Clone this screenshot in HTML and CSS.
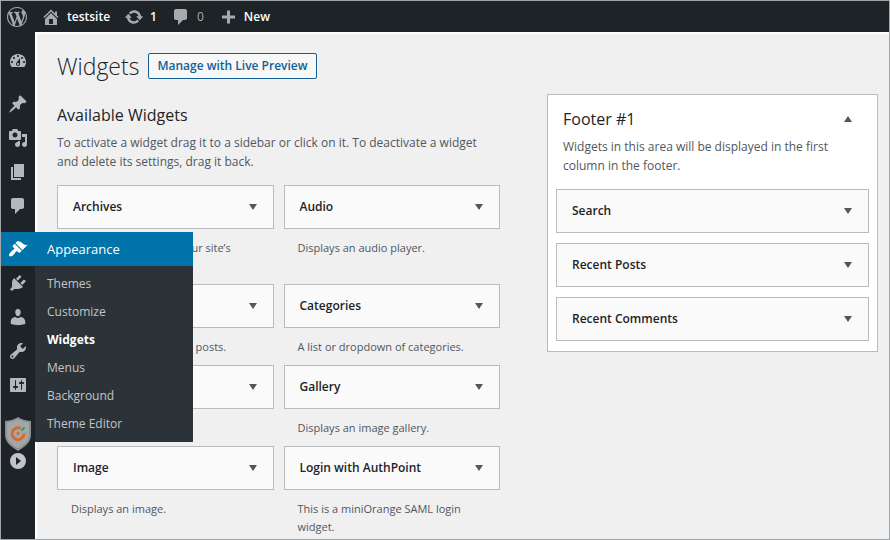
FILE: index.html
```html
<!DOCTYPE html>
<html lang="en">
<head>
<meta charset="utf-8">
<meta name="viewport" content="width=device-width, initial-scale=1">
<title>Widgets - testsite</title>
<link rel="stylesheet" href="styles.css">
</head>
<body>
<div class="frame">
  <header class="topbar">
    <a class="topbar-item topbar-logo" href="#" aria-label="WordPress"><svg class="icon" viewBox="0 0 20 20"><path d="M20 10c0-5.51-4.49-10-10-10C4.48 0 0 4.49 0 10c0 5.52 4.48 10 10 10 5.51 0 10-4.48 10-10zM7.78 15.37L4.37 6.22c.55-.02 1.17-.08 1.17-.08.5-.06.44-1.13-.06-1.11 0 0-1.45.11-2.37.11-.18 0-.37 0-.58-.01C4.12 2.69 6.87 1.11 10 1.11c2.33 0 4.45.87 6.05 2.34-.68-.11-1.65.39-1.65 1.58 0 .74.45 1.36.9 2.1.35.61.55 1.36.55 2.46 0 1.49-1.4 5-1.4 5l-3.03-8.37c.54-.02.82-.17.82-.17.5-.05.44-1.25-.06-1.22 0 0-1.44.12-2.38.12-.87 0-2.33-.12-2.33-.12-.5-.03-.56 1.2-.06 1.22l.92.08 1.26 3.41zM17.41 10c.24-.64.74-1.87.43-4.25.7 1.29 1.05 2.71 1.05 4.25 0 3.29-1.73 6.24-4.4 7.78.97-2.59 1.94-5.2 2.92-7.78zM6.1 18.09C3.12 16.65 1.11 13.53 1.11 10c0-1.3.23-2.48.72-3.59C3.25 10.3 4.67 14.2 6.1 18.09zm4.03-6.63l2.58 6.98c-.86.29-1.76.45-2.71.45-.79 0-1.57-.11-2.29-.33.81-2.38 1.62-4.74 2.42-7.1z"/></svg></a>
    <a class="topbar-item" href="#"><svg class="icon" viewBox="0 0 20 20"><path d="M16 8.5l1.53 1.53-1.06 1.06L10 4.6l-6.47 6.49-1.06-1.06L10 2.5l4 4v-2h2v4zm-6-2.46l6 5.99V18H4v-5.97zM12 17v-5H8v5h4z"/></svg>testsite</a>
    <a class="topbar-item" href="#"><svg class="icon" viewBox="0 0 20 20"><path d="M10.2 3.28c3.53 0 6.43 2.61 6.92 6h2.08l-3.5 4-3.5-4h2.32c-.45-1.97-2.21-3.45-4.32-3.45-1.45 0-2.73.71-3.54 1.78L4.95 5.66C6.23 4.2 8.11 3.28 10.2 3.28zm-.4 13.44c-3.52 0-6.43-2.61-6.92-6H.8l3.5-4c1.17 1.33 2.33 2.67 3.5 4H5.48c.45 1.97 2.21 3.45 4.32 3.45 1.45 0 2.73-.71 3.54-1.78l1.71 1.95c-1.28 1.46-3.15 2.38-5.25 2.38z"/></svg>1</a>
    <a class="topbar-item topbar-muted" href="#"><svg class="icon" viewBox="0 0 20 20"><path d="M5 2h9c1.1 0 2 .9 2 2v7c0 1.1-.9 2-2 2h-2l-5 5v-5H5c-1.1 0-2-.9-2-2V4c0-1.1.9-2 2-2z"/></svg>0</a>
    <a class="topbar-item" href="#"><svg class="icon" viewBox="0 0 20 20"><path d="M17 8.5v3h-5v5H9v-5H4v-3h5v-5h3v5h5z"/></svg>New</a>
  </header>

  <div class="shell">
    <nav class="sidebar" aria-label="Main menu">
      <a class="menu-link" href="#" aria-label="Dashboard"><svg class="icon" viewBox="0 0 20 20"><path d="M3.76 16h12.48c1.1-1.37 1.76-3.11 1.76-5 0-4.42-3.58-8-8-8s-8 3.58-8 8c0 1.89.66 3.63 1.76 5zM10 4c.55 0 1 .45 1 1s-.45 1-1 1-1-.45-1-1 .45-1 1-1zM6 6c.55 0 1 .45 1 1s-.45 1-1 1-1-.45-1-1 .45-1 1-1zm8 0c.55 0 1 .45 1 1s-.45 1-1 1-1-.45-1-1 .45-1 1-1zm-5.37 5.55L12 7v6c0 1.1-.9 2-2 2s-2-.9-2-2c0-.57.24-1.08.63-1.45zM4 10c.55 0 1 .45 1 1s-.45 1-1 1-1-.45-1-1 .45-1 1-1zm12 0c.55 0 1 .45 1 1s-.45 1-1 1-1-.45-1-1 .45-1 1-1zm-5 3c0-.55-.45-1-1-1s-1 .45-1 1 .45 1 1 1 1-.45 1-1z"/></svg></a>
      <div class="menu-group">
        <a class="menu-link" href="#" aria-label="Posts"><svg class="icon" viewBox="0 0 20 20"><path d="M10.44 3.02l1.82-1.82 6.36 6.35-1.83 1.82c-1.05-.68-2.48-.57-3.41.36l-.75.75c-.92.93-1.04 2.35-.35 3.41l-1.83 1.82-2.41-2.41-2.8 2.79c-.42.42-3.38 2.71-3.8 2.29s1.86-3.39 2.28-3.81l2.79-2.79L4.1 9.36l1.83-1.82c1.05.69 2.48.57 3.4-.36l.75-.75c.93-.92 1.05-2.35.36-3.41z"/></svg></a>
        <a class="menu-link" href="#" aria-label="Media"><svg class="icon" viewBox="0 0 20 20"><path d="M13 11V4c0-.55-.45-1-1-1h-1.67L9 1H5L3.67 3H2c-.55 0-1 .45-1 1v7c0 .55.45 1 1 1h10c.55 0 1-.45 1-1zM7 4.5c1.38 0 2.5 1.12 2.5 2.5S8.38 9.5 7 9.5 4.5 8.38 4.5 7 5.62 4.5 7 4.5zM14 6h5v10.5c0 1.38-1.12 2.5-2.5 2.5S14 17.88 14 16.5s1.12-2.5 2.5-2.5c.17 0 .34.02.5.05V9h-3V6zm-4 8.05V13h2v3.5c0 1.38-1.12 2.5-2.5 2.5S7 17.88 7 16.5 8.12 14 9.5 14c.17 0 .34.02.5.05z"/></svg></a>
        <a class="menu-link" href="#" aria-label="Pages"><svg class="icon" viewBox="0 0 20 20"><path d="M6 15V2h10v13H6zm-1 1h8v2H3V5h2v11z"/></svg></a>
        <a class="menu-link" href="#" aria-label="Comments"><svg class="icon" viewBox="0 0 20 20"><path d="M5 2h9c1.1 0 2 .9 2 2v7c0 1.1-.9 2-2 2h-2l-5 5v-5H5c-1.1 0-2-.9-2-2V4c0-1.1.9-2 2-2z"/></svg></a>
      </div>
      <div class="menu-group">
        <div class="menu-current">
          <a class="menu-link" href="#" aria-label="Appearance menu"><svg class="icon" viewBox="0 0 20 20"><path d="M14.48 11.06L7.41 3.99l1.5-1.5c.5-.56 2.3-.47 3.51.32 1.21.8 1.43 1.28 2.91 2.1 1.18.64 2.45 1.26 4.45.85zm-.71.71L6.7 4.7 4.93 6.47c-.39.39-.39 1.02 0 1.41l1.06 1.06c.39.39.39 1.03 0 1.42-.6.6-1.43 1.11-2.21 1.69-.35.26-.7.53-1.01.84C1.43 14.23.4 16.08 1.4 17.07c.99 1 2.84-.03 4.18-1.36.31-.31.58-.66.85-1.02.57-.78 1.08-1.61 1.69-2.21.39-.39 1.02-.39 1.41 0l1.06 1.06c.39.39 1.02.39 1.41 0z"/></svg></a>
          <div class="flyout">
            <a class="flyout-title" href="#">Appearance</a>
            <ul class="flyout-list">
              <li><a href="#">Themes</a></li>
              <li><a href="#">Customize</a></li>
              <li><a class="active" href="#" aria-current="page">Widgets</a></li>
              <li><a href="#">Menus</a></li>
              <li><a href="#">Background</a></li>
              <li><a href="#">Theme Editor</a></li>
            </ul>
          </div>
        </div>
        <a class="menu-link" href="#" aria-label="Plugins"><svg class="icon" viewBox="0 0 20 20"><path d="M13.11 4.36L9.87 7.6 8 5.73l3.24-3.24c.35-.34 1.05-.2 1.56.32.52.51.66 1.21.31 1.55zm-8 1.77l.91-1.12 9.01 9.01-1.19.84c-.71.71-2.63 1.16-3.82 1.16H6.14L4.9 17.26c-.59.59-1.54.59-2.12 0-.59-.58-.59-1.53 0-2.12l1.24-1.24v-3.88c0-1.13.4-3.19 1.09-3.89zm7.26 3.97l3.24-3.24c.34-.35 1.04-.21 1.55.31.52.51.66 1.21.31 1.55l-3.24 3.25z"/></svg></a>
        <a class="menu-link" href="#" aria-label="Users"><svg class="icon" viewBox="0 0 20 20"><path d="M10 9.25c-2.27 0-2.73-3.44-2.73-3.44C7 4.02 7.82 2 9.97 2c2.16 0 2.98 2.02 2.71 3.81 0 0-.41 3.44-2.68 3.44zM7.3 10c.9.7 1.8 1 2.7 1s1.800-.3 2.700-1c2.400 0 4.540 2.330 4.540 4.530v2.490s-3.650 1.130-7.240 1.130c-3.650 0-7.240-1.130-7.240-1.130v-2.490c0-2.250 2-4.530 4.540-4.530z"/></svg></a>
        <a class="menu-link" href="#" aria-label="Tools"><svg class="icon" viewBox="0 0 20 20"><path d="M16.68 9.77c-1.34 1.34-3.3 1.67-4.95.99l-5.41 6.52c-.99.99-2.59.99-3.58 0s-.99-2.59 0-3.57l6.52-5.42c-.68-1.65-.35-3.61.99-4.95 1.28-1.28 3.12-1.62 4.72-1.06l-2.89 2.89 2.82 2.82 2.86-2.87c.53 1.58.18 3.39-1.08 4.65zM3.81 16.21c.4.39 1.04.39 1.43 0 .4-.4.4-1.04 0-1.43-.39-.4-1.03-.4-1.43 0-.39.39-.39 1.03 0 1.43z"/></svg></a>
        <a class="menu-link" href="#" aria-label="Settings"><svg class="icon" viewBox="0 0 20 20"><path d="M18 16V4c0-.55-.45-1-1-1H3c-.55 0-1 .45-1 1v12c0 .55.45 1 1 1h14c.55 0 1-.45 1-1zM8 11h1c.55 0 1 .45 1 1s-.45 1-1 1H8v1.5c0 .28-.22.5-.5.5s-.5-.22-.5-.5V13H6c-.55 0-1-.45-1-1s.45-1 1-1h1V5.5c0-.28.22-.5.5-.5s.5.22.5.5V11zm5-2h-1c-.55 0-1-.45-1-1s.45-1 1-1h1V5.5c0-.28.22-.5.5-.5s.5.22.5.5V7h1c.55 0 1 .45 1 1s-.45 1-1 1h-1v5.5c0 .28-.22.5-.5.5s-.5-.22-.5-.5V9z"/></svg></a>
      </div>
      <div class="menu-group menu-extra">
        <a class="menu-link" href="#" aria-label="miniOrange"><svg class="shield" viewBox="0 0 26 34"><path fill="#8d9092" d="M13 0C10 2.5 5 3.5 0 4v14c0 8 7 12 13 16 6-4 13-8 13-16V4C21 3.5 16 2.5 13 0z"/><path fill="#a3a6a8" d="M13 2C10 4 6 5 2 5.5V18c0 7 6 10 11 13.5C18 28 24 25 24 18V5.5C20 5 16 4 13 2z"/><path fill="none" stroke="#d9681d" stroke-width="2.6" d="M15.5 11.200A6 6 0 1 0 19 16.500"/><path fill="none" stroke="#3f9455" stroke-width="2" d="M16.500 13.500l3-3"/><circle cx="13" cy="16.5" r="1.4" fill="#d9681d"/></svg></a>
        <button class="collapse" type="button" aria-label="Expand menu"><svg class="icon" viewBox="0 0 20 20"><path fill-rule="evenodd" d="M10 2a8 8 0 1 1 0 16 8 8 0 0 1 0-16zM8 6v8l5-4z"/></svg></button>
      </div>
    </nav>

    <main class="content">
      <div class="heading">
        <h1>Widgets</h1>
        <a class="preview-button" href="#">Manage with Live Preview</a>
      </div>
      <div class="columns">
        <section class="available">
          <h2>Available Widgets</h2>
          <p class="intro">To activate a widget drag it to a sidebar or click on it. To deactivate a widget and delete its settings, drag it back.</p>
          <div class="widget-grid">
            <article><button class="widget" type="button">Archives<span class="arrow"></span></button><p class="note">A monthly archive of your site’s Posts.</p></article>
            <article><button class="widget" type="button">Audio<span class="arrow"></span></button><p class="note">Displays an audio player.</p></article>
            <article><button class="widget" type="button" aria-label="Calendar"><span class="arrow"></span></button><p class="note">A calendar of your site’s posts.</p></article>
            <article><button class="widget" type="button">Categories<span class="arrow"></span></button><p class="note">A list or dropdown of categories.</p></article>
            <article><button class="widget" type="button" aria-label="Custom HTML"><span class="arrow"></span></button></article>
            <article><button class="widget" type="button">Gallery<span class="arrow"></span></button><p class="note">Displays an image gallery.</p></article>
            <article><button class="widget" type="button">Image<span class="arrow"></span></button><p class="note">Displays an image.</p></article>
            <article><button class="widget" type="button">Login with AuthPoint<span class="arrow"></span></button><p class="note">This is a miniOrange SAML login widget.</p></article>
          </div>
        </section>
        <section class="area">
          <div class="area-head">
            <h2>Footer #1</h2>
            <button class="area-toggle" type="button" aria-label="Collapse Footer #1"><span class="arrow arrow-up"></span></button>
          </div>
          <p class="intro">Widgets in this area will be displayed in the first column in the footer.</p>
          <div class="area-list">
            <button class="widget" type="button">Search<span class="arrow"></span></button>
            <button class="widget" type="button">Recent Posts<span class="arrow"></span></button>
            <button class="widget" type="button">Recent Comments<span class="arrow"></span></button>
          </div>
        </section>
      </div>
    </main>
  </div>
</div>
</body>
</html>
```
FILE: styles.css
```css
* {
  box-sizing: border-box;
}

body {
  margin: 0;
  color: #50575e;
  background: #f0f0f1;
  font: 12px/18px "Open Sans", "Noto Sans", sans-serif;
}

h1,
h2,
p,
ul {
  margin: 0;
  padding: 0;
}

a {
  color: inherit;
  text-decoration: none;
}

button {
  font: inherit;
  cursor: pointer;
}

.frame {
  display: flex;
  flex-direction: column;
  height: 100vh;
  overflow: hidden;
  border: 1px solid #a2a5a7;
}

.icon {
  flex: none;
  width: 20px;
  height: 20px;
  fill: currentColor;
}

/* Top bar */
.topbar {
  display: flex;
  flex: none;
  align-items: center;
  gap: 14px;
  height: 31px;
  padding: 0 6px;
  background: #1d2327;
  color: #fff;
  font-weight: 600;
}

.topbar-item {
  display: flex;
  align-items: center;
  gap: 6px;
}

.topbar-item .icon,
.topbar-muted {
  color: #a7aaad;
}

.topbar-muted {
  font-weight: 400;
}

/* Sidebar */
.shell {
  display: flex;
  flex: 1;
  min-height: 0;
}

.sidebar {
  flex: none;
  width: 34px;
  padding-top: 12px;
  background: #1d2327;
  color: #b4b8bb;
}

.menu-link {
  display: flex;
  align-items: center;
  justify-content: center;
  height: 34px;
}

.menu-group {
  margin-top: 9px;
}

.menu-current {
  position: relative;
  background: #0073aa;
  color: #fff;
}

.flyout {
  position: absolute;
  z-index: 2;
  top: 0;
  left: 100%;
  width: 158px;
  background: #2c3338;
}

.flyout-title {
  display: block;
  padding: 0 12px;
  background: #0073aa;
  font-size: 13px;
  font-weight: 500;
  line-height: 34px;
}

.flyout-list {
  padding: 4px 0;
  color: #c3c4c7;
  line-height: 28px;
  list-style: none;
}

.flyout-list a {
  display: block;
  padding: 0 12px;
}

.flyout-list .active {
  color: #fff;
  font-weight: 700;
}

.menu-extra {
  margin-top: 15px;
}

.shield {
  width: 26px;
  height: 34px;
}

.collapse {
  display: flex;
  justify-content: center;
  width: 100%;
  padding: 0;
  border: 0;
  background: none;
  color: #c3c4c7;
}

/* Page */
.content {
  flex: 1;
  min-width: 0;
  padding: 16px 11px 0 20px;
  border: solid #fff;
  border-width: 2px 0 0 2px;
}

.heading {
  display: flex;
  align-items: center;
  gap: 9px;
  height: 32px;
}

h1 {
  color: #1d2327;
  font-size: 23px;
  font-weight: 300;
}

.preview-button {
  padding: 0 8px;
  border: 1px solid #135e96;
  border-radius: 2px;
  background: #f6f7f7;
  color: #135e96;
  font-weight: 600;
  line-height: 24px;
}

.columns {
  display: grid;
  grid-template-columns: 443fr 331fr;
  align-items: start;
  gap: 47px;
  padding-top: 12px;
}

.available {
  padding-top: 10px;
}

h2 {
  color: #1d2327;
  font-size: 16px;
  font-weight: 500;
  line-height: 22px;
}

.intro {
  line-height: 19px;
}

.available .intro {
  padding: 7px 0 14px;
}

.widget-grid {
  display: grid;
  grid-template-columns: 1fr 1fr;
  column-gap: 10px;
}

.widget {
  display: flex;
  align-items: center;
  justify-content: space-between;
  width: 100%;
  height: 44px;
  padding: 0 16px 0 15px;
  border: 1px solid #b9bbbe;
  background: #fafafa;
  color: #1d2327;
  font-weight: 600;
}

.note {
  padding: 10px 14px 9px;
  font-size: 11px;
}

.arrow {
  margin-left: auto;
  border: solid transparent;
  border-width: 6px 4px 0;
  border-top-color: #50575e;
}

.arrow-up {
  border-width: 0 4px 6px;
  border-bottom-color: #50575e;
}

.area {
  padding: 13px 8px 10px;
  border: 1px solid #b9bbbe;
  background: #fff;
}

.area-head {
  display: flex;
  align-items: center;
  justify-content: space-between;
  padding: 0 17px 0 7px;
}

.area-toggle {
  display: flex;
  padding: 0;
  border: 0;
  background: none;
}

.area .intro {
  padding: 7px 7px 14px;
}

.area-list {
  display: grid;
  gap: 10px;
}
```
